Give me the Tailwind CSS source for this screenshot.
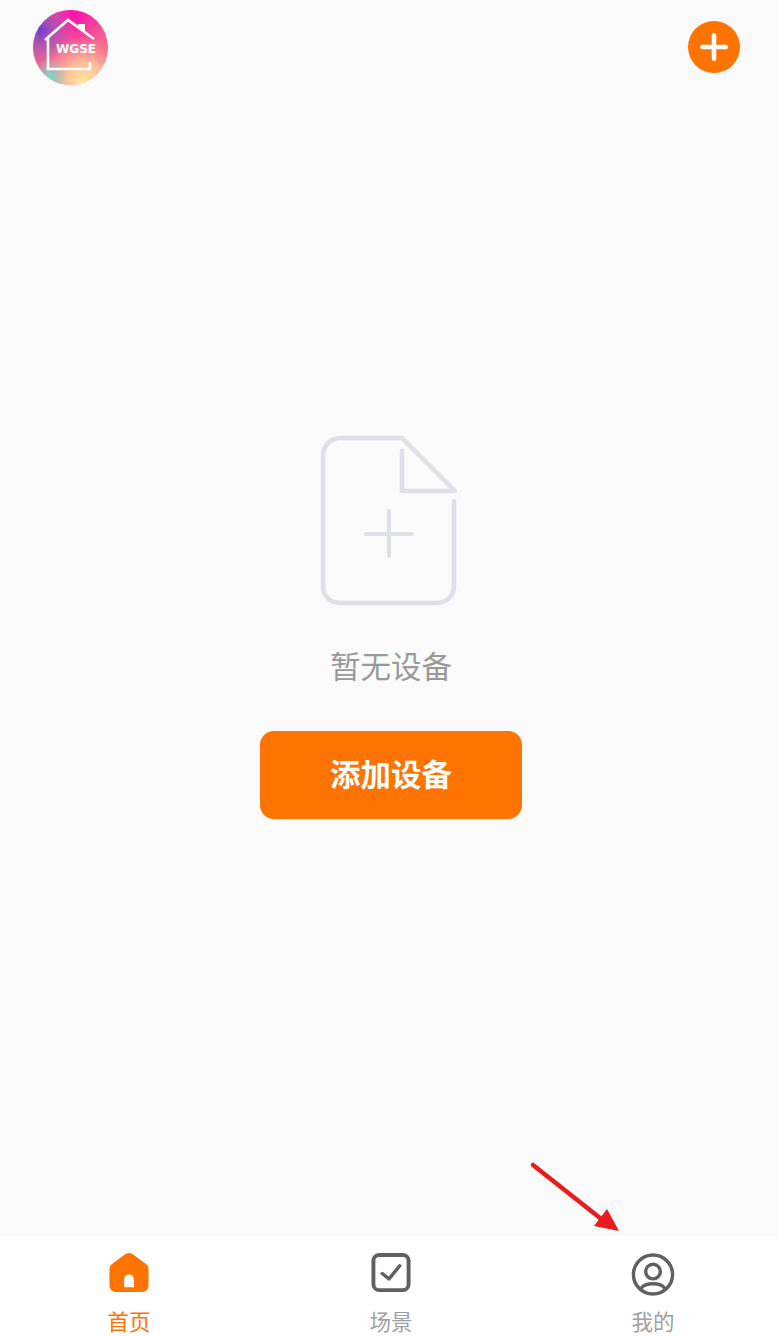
<!DOCTYPE html>
<html lang="zh-CN">
<head>
    <meta charset="UTF-8">
    <meta name="viewport" content="width=device-width, initial-scale=1.0">
    <title>首页</title>
    <script src="https://cdn.jsdelivr.net/npm/@tailwindcss/browser@4"></script>
</head>
<body class="bg-[#fafafa] font-['Noto_Sans_CJK_SC','Noto_Sans',sans-serif]">
    <div class="relative flex h-[1336px] w-[778px] flex-col overflow-hidden">
        <!-- Header -->
        <header class="flex h-[85px] shrink-0 items-start justify-between pt-[10px] pl-[33px] pr-[38px]">
            <svg class="h-[75px] w-[75px]" viewBox="0 0 75 75" fill="none">
                <defs>
                    <radialGradient id="gTop" cx="0.55" cy="0.05" r="0.5">
                        <stop offset="0" stop-color="#ff0fb0"/>
                        <stop offset="1" stop-color="#ff0fb0" stop-opacity="0"/>
                    </radialGradient>
                    <radialGradient id="gLeft" cx="0.1" cy="0.28" r="0.45">
                        <stop offset="0" stop-color="#6a3ed4"/>
                        <stop offset="0.5" stop-color="#9a52bc" stop-opacity="0.6"/>
                        <stop offset="1" stop-color="#a855b0" stop-opacity="0"/>
                    </radialGradient>
                    <radialGradient id="gBottom" cx="0.68" cy="0.98" r="0.62">
                        <stop offset="0" stop-color="#ffec9c"/>
                        <stop offset="0.45" stop-color="#ffd49a" stop-opacity="0.8"/>
                        <stop offset="1" stop-color="#ffb09a" stop-opacity="0"/>
                    </radialGradient>
                    <radialGradient id="gTeal" cx="0.22" cy="0.9" r="0.26">
                        <stop offset="0" stop-color="#6fdccf"/>
                        <stop offset="1" stop-color="#8fd0c8" stop-opacity="0"/>
                    </radialGradient>
                </defs>
                <circle cx="37.5" cy="37.5" r="37.5" fill="#f3638f"/>
                <circle cx="37.5" cy="37.5" r="37.5" fill="url(#gTop)"/>
                <circle cx="37.5" cy="37.5" r="37.5" fill="url(#gLeft)"/>
                <circle cx="37.5" cy="37.5" r="37.5" fill="url(#gBottom)"/>
                <circle cx="37.5" cy="37.5" r="37.5" fill="url(#gTeal)"/>
                <path d="M12 30 35 10 61 29" stroke="#fff" stroke-width="2.6"/>
                <path d="M45 18V14H52V23Z" fill="#fff"/>
                <path d="M15 27V59H57V52" stroke="#fff" stroke-width="2.6"/>
                <text x="23" y="43" textLength="40" lengthAdjust="spacingAndGlyphs" fill="#fff" font-family="DejaVu Sans, sans-serif" font-weight="700" font-size="11.500">WGSE</text>
            </svg>
            <button class="mt-[11px] flex h-[52px] w-[52px] items-center justify-center rounded-full bg-[#ff7300]">
                <svg class="h-[32px] w-[32px]" viewBox="0 0 32 32" fill="none" stroke="#fff" stroke-width="4.5" stroke-linecap="round">
                    <path d="M4.250 16H27.750M16 4.250V27.750"/>
                </svg>
            </button>
        </header>

        <!-- Empty state -->
        <main class="ml-1 flex flex-1 flex-col items-center pt-[351px]">
            <svg class="h-[170px] w-[136px] overflow-visible" viewBox="2 0 136 170" fill="none" stroke="#dfe0e6" stroke-width="4.500" stroke-linecap="round" stroke-linejoin="round">
                <path d="M81 2H20C9 2 2 10 2 20V150C2 160 9 167 20 167H115C126 167 133 160 133 150V65"/>
                <path d="M81 2 134 55H81V15"/>
                <path d="M45 98H91M68 75V120" stroke-width="4"/>
            </svg>
            <p class="mt-[37px] text-[30.500px] leading-[44px] text-[#999999]">暂无设备</p>
            <button class="mt-[44px] h-[88px] w-[262px] rounded-[14px] bg-[#ff7300] pb-[3px] text-[30.500px] font-bold text-white">添加设备</button>
        </main>

        <!-- Tab bar -->
        <nav class="flex h-[100px] shrink-0 justify-between bg-white pt-[17px] pl-[103px] pr-[99px] text-[21.500px] leading-[30px]">
            <a class="flex w-[52px] flex-col items-center text-[#ff7300]">
                <svg class="h-[44px] w-[44px]" viewBox="0 0 44 44">
                    <path d="M22 0C24 0 25.500 1 27 2L39 11C41 12.500 42 14 42 17V33C42 37 39 40 35 40H9C5 40 2 37 2 33V17C2 14 3 12.500 5 11L17 2C18.500 1 20 0 22 0Z" fill="#ff7300"/>
                    <path d="M17 35V27C17 24 19 22 22 22C25 22 27 24 27 27V35Z" fill="#fff"/>
                </svg>
                <span class="mt-[10px]">首页</span>
            </a>
            <a class="flex w-[52px] flex-col items-center text-[#a0a0a0]">
                <svg class="h-[44px] w-[44px]" viewBox="0 0 44 44" fill="none" stroke="#606060" stroke-linecap="round" stroke-linejoin="round">
                    <rect x="4" y="2" width="36" height="36" rx="6" stroke-width="4"/>
                    <path d="M13 21 20 26.500 31 13" stroke-width="3.500"/>
                </svg>
                <span class="mt-[10px]">场景</span>
            </a>
            <a class="flex w-[52px] flex-col items-center text-[#a0a0a0]">
                <svg class="h-[44px] w-[44px]" viewBox="0 0 44 44" fill="none" stroke="#606060" stroke-width="3.500">
                    <circle cx="22" cy="22" r="20"/>
                    <circle cx="22" cy="19" r="7.500"/>
                    <path d="M10 36C14 30 30 30 34 36"/>
                </svg>
                <span class="mt-[10px]">我的</span>
            </a>
        </nav>

        <!-- Annotation arrow, lies over the page -->
        <svg class="absolute left-[525px] top-[1158px] h-[80px] w-[100px]" viewBox="0 0 100 80">
            <path d="M8 7 75 60" stroke="#e81c1f" stroke-width="4.500" stroke-linecap="round"/>
            <path d="M94 73 69 68 82 51Z" fill="#e81c1f"/>
        </svg>
    </div>
</body>
</html>
